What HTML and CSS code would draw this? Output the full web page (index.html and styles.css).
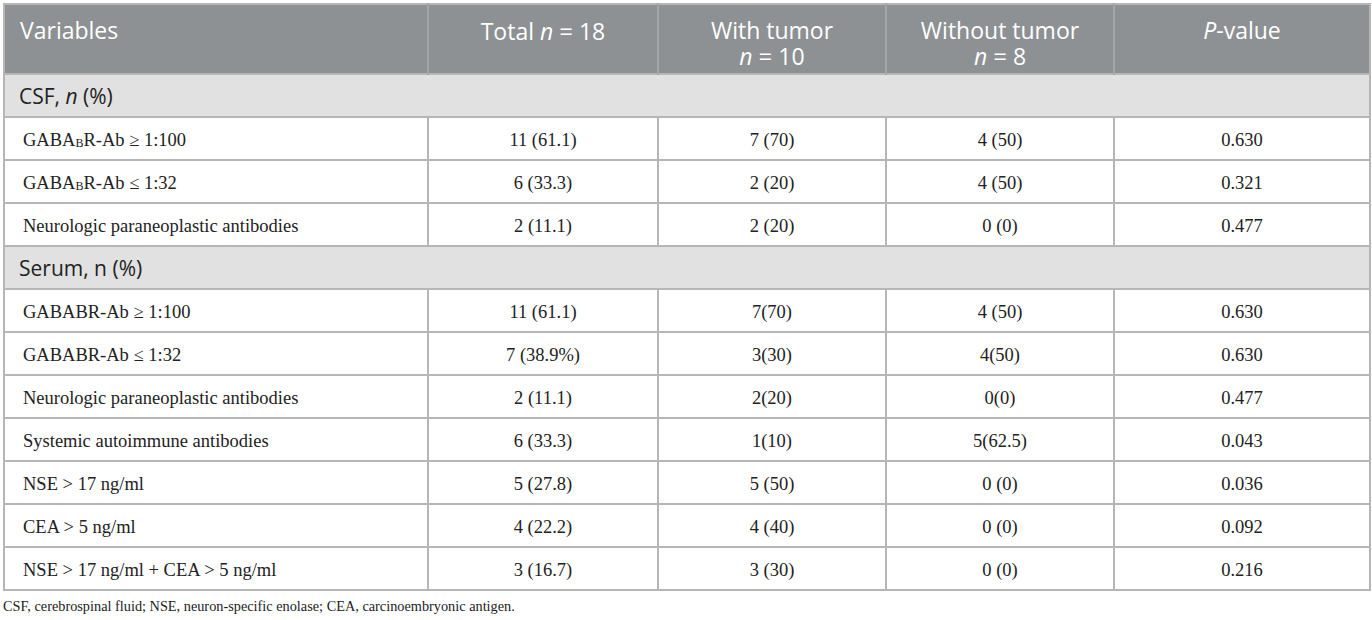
FILE: index.html
```html
<HTML>
<HEAD>
<TITLE>Table</TITLE>
<link rel="stylesheet" href="styles.css">
</HEAD>
<BODY>
<TABLE CLASS="DATA">
<COLGROUP>
<COL CLASS="C1"><COL CLASS="C2"><COL CLASS="C3"><COL CLASS="C4"><COL CLASS="C5">
</COLGROUP>
<THEAD>
<TR CLASS="HEADER">
<TH CLASS="LEFT"><SPAN CLASS="LN">Variables</SPAN></TH>
<TH><SPAN CLASS="LN">Total <I>n</I><SPAN CLASS="EQ">=</SPAN>18</SPAN></TH>
<TH><SPAN CLASS="LN">With tumor</SPAN><SPAN CLASS="LN"><I>n</I><SPAN CLASS="EQ">=</SPAN>10</SPAN></TH>
<TH><SPAN CLASS="LN">Without tumor</SPAN><SPAN CLASS="LN"><I>n</I><SPAN CLASS="EQ">=</SPAN>8</SPAN></TH>
<TH><SPAN CLASS="LN"><I>P</I>-value</SPAN></TH>
</TR>
</THEAD>
<TBODY>
<TR CLASS="SECTION"><TD COLSPAN=5>CSF, <I>n</I> (%)</TD></TR>
<TR><TD>GABA<SUB CLASS="SC">B</SUB>R-Ab &ge; 1:100</TD><TD>11 (61.1)</TD><TD>7 (70)</TD><TD>4 (50)</TD><TD>0.630</TD></TR>
<TR><TD>GABA<SUB CLASS="SC">B</SUB>R-Ab &le; 1:32</TD><TD>6 (33.3)</TD><TD>2 (20)</TD><TD>4 (50)</TD><TD>0.321</TD></TR>
<TR><TD>Neurologic paraneoplastic antibodies</TD><TD>2 (11.1)</TD><TD>2 (20)</TD><TD>0 (0)</TD><TD>0.477</TD></TR>
<TR CLASS="SECTION"><TD COLSPAN=5>Serum, n (%)</TD></TR>
<TR><TD>GABABR-Ab &ge; 1:100</TD><TD>11 (61.1)</TD><TD>7(70)</TD><TD>4 (50)</TD><TD>0.630</TD></TR>
<TR><TD>GABABR-Ab &le; 1:32</TD><TD>7 (38.9%)</TD><TD>3(30)</TD><TD>4(50)</TD><TD>0.630</TD></TR>
<TR><TD>Neurologic paraneoplastic antibodies</TD><TD>2 (11.1)</TD><TD>2(20)</TD><TD>0(0)</TD><TD>0.477</TD></TR>
<TR><TD>Systemic autoimmune antibodies</TD><TD>6 (33.3)</TD><TD>1(10)</TD><TD>5(62.5)</TD><TD>0.043</TD></TR>
<TR><TD>NSE &gt; 17 ng/ml</TD><TD>5 (27.8)</TD><TD>5 (50)</TD><TD>0 (0)</TD><TD>0.036</TD></TR>
<TR><TD>CEA &gt; 5 ng/ml</TD><TD>4 (22.2)</TD><TD>4 (40)</TD><TD>0 (0)</TD><TD>0.092</TD></TR>
<TR><TD>NSE &gt; 17 ng/ml + CEA &gt; 5 ng/ml</TD><TD>3 (16.7)</TD><TD>3 (30)</TD><TD>0 (0)</TD><TD>0.216</TD></TR>
</TBODY>
</TABLE>
<P CLASS="NOTE">CSF, cerebrospinal fluid; NSE, neuron-specific enolase; CEA, carcinoembryonic antigen.</P>
</BODY>
</HTML>
```

FILE: styles.css
```css
body {margin: 0; padding: 3px 3px 0 3px; background-color: #FFFFFF; color: #222222;}
table.DATA {width: 1366px; border-collapse: collapse; border: 2px solid #B5B7B6; table-layout: fixed; font-family: "Liberation Serif", serif; font-size: 18.5px;}
col.C1 {width: 424px;}
col.C2 {width: 230px;}
col.C3 {width: 228px;}
col.C4 {width: 228px;}
col.C5 {width: 256px;}
tr.HEADER {background-color: #8D9194; color: #FFFFFF;}
tr.HEADER th {font-family: "Open Sans", sans-serif; font-weight: normal; font-size: 23px; line-height: 25px; text-align: center; vertical-align: top; padding: 13px 8px 0 8px; height: 70px; border-left: 2px solid #A3A6A8;}
tr.HEADER th.LEFT {text-align: left; padding-left: 15px; border-left: none;}
span.LN {display: block; height: 25px; overflow: visible;}
span.EQ {margin: 0 6px; font-size: 24px;}
tr.SECTION td {background-color: #E0E1E0; font-family: "Open Sans", sans-serif; font-size: 21px; text-align: left; padding: 0 0 0 14px; height: 43px; border-top: 2px solid #B5B7B6;}
td {border: 2px solid #B5B7B6; height: 43px; padding: 4px 0 0 0; text-align: center; vertical-align: middle;}
td:first-child {text-align: left; padding-left: 18px;}
sub.SC {font-size: 12px; vertical-align: 0; position: relative; top: 1px;}
p.NOTE {margin: 7px 0 0 0; font-family: "Liberation Serif", serif; font-size: 14.3px;}
```
